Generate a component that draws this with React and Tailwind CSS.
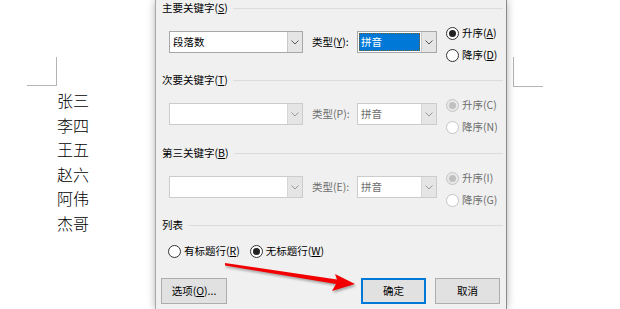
import React from "react";

const ui = "font-['Microsoft_YaHei_UI','Noto_Sans_CJK_SC',sans-serif] text-[10.5px]";

function Chevron({ disabled }) {
    return (
        <svg width="8" height="5" viewBox="0 0 8 5">
            <path d="M0.5 0.5 L4 4 L7.5 0.5" fill="none" stroke={disabled ? "#9a9a9a" : "#5a5a5a"} strokeWidth="1" />
        </svg>
    );
}

function Combo({ text, width, selected, disabled }) {
    return (
        <div className={`flex h-[22px] border bg-white ${disabled ? "border-[#cccccc]" : "border-[#a8a8a8]"} ${width}`}>
            <div className="flex flex-1 items-center p-[1px]">
                {selected ? (
                    <span className="flex h-full w-full items-center bg-[#0078d7] px-[2px] text-white outline outline-1 outline-dotted outline-[#7a5a2a] -outline-offset-1">{text}</span>
                ) : (
                    <span className={`pl-[2px] ${disabled ? "text-[#6d6d6d]" : "text-black"}`}>{text}</span>
                )}
            </div>
            <div className={`flex w-[15px] items-center justify-center border-l bg-[#e5e5e5] ${disabled ? "border-[#d6d6d6]" : "border-[#c8c8c8]"}`}>
                <Chevron disabled={disabled} />
            </div>
        </div>
    );
}

function Radio({ label, checked, disabled }) {
    return (
        <div className="flex h-4 items-center gap-[3px]">
            <span className={`flex h-[13px] w-[13px] items-center justify-center rounded-full border ${disabled ? (checked ? "border-[#c4c4c4] bg-[#e8e8e8]" : "border-[#c4c4c4] bg-white") : "border-[#333333] bg-white"}`}>
                {checked && <span className={`h-[7px] w-[7px] rounded-full ${disabled ? "bg-[#c0c0c0]" : "bg-[#222222]"}`} />}
            </span>
            <span className={disabled ? "text-[#6d6d6d]" : "text-black"}>{label}</span>
        </div>
    );
}

function Header({ children }) {
    return (
        <div className="flex h-4 items-center pl-[6px] pr-[3px]">
            <span className="text-black">{children}</span>
            <div className="ml-[5px] h-px flex-1 bg-[#dcdcdc]" />
        </div>
    );
}

function KeySection({ title, typeLabel, value, typeValue, asc, desc, disabled, selected, className }) {
    return (
        <div className={className}>
            <Header>{title}</Header>
            <div className="mt-[9px] flex items-start pl-[13px]">
                <div className="mt-[6px] flex items-center">
                    <Combo text={value} width="w-[134px]" disabled={disabled} />
                    <span className={`ml-[9px] w-[45px] ${disabled ? "text-[#6d6d6d]" : "text-black"}`}>{typeLabel}</span>
                    <Combo text={typeValue} width="w-[80px]" disabled={disabled} selected={selected} />
                </div>
                <div className="ml-[9px] flex flex-col gap-[6px]">
                    <Radio label={asc} checked disabled={disabled} />
                    <Radio label={desc} disabled={disabled} />
                </div>
            </div>
        </div>
    );
}

function Btn({ children, primary }) {
    return (
        <div className={`flex h-[26px] items-center justify-center bg-[#e1e1e1] text-black ${primary ? "w-[65px] border-2 border-[#0078d7]" : "border border-[#adadad]"}`}>
            {children}
        </div>
    );
}

export default function App() {
    const names = ["张三", "李四", "王五", "赵六", "阿伟", "杰哥"];

    return (
        <div className="relative flex h-[309px] w-[620px] overflow-hidden bg-white">
            <div className="w-[155px] shrink-0">
                <div className="ml-[27px] mt-[57px] h-[29px] w-[30px] border-b border-r border-[#b4b4b4]" />
                <div className="mt-[2px] pl-[57px] font-['Noto_Sans_CJK_SC',sans-serif] text-[16px] font-light leading-[24.5px] text-black">
                    {names.map((n) => (
                        <div key={n}>{n}</div>
                    ))}
                </div>
            </div>

            <div className={`relative z-10 h-full w-[352px] shrink-0 border-x border-l-[#a8a8a8] border-r-[#8a8a8a] bg-[#f0f0f0] shadow-[0_0_8px_rgba(0,0,0,0.3)] ${ui}`}>
                <KeySection title={<>主要关键字(<u>S</u>)</>} typeLabel={<>类型(<u>Y</u>):</>} value="段落数" typeValue="拼音" selected asc={<>升序(<u>A</u>)</>} desc={<>降序(<u>D</u>)</>} />
                <KeySection className="mt-[9px]" title={<>次要关键字(<u>T</u>)</>} typeLabel="类型(P):" value="" typeValue="拼音" disabled asc="升序(C)" desc="降序(N)" />
                <KeySection className="mt-[10px]" title={<>第三关键字(<u>B</u>)</>} typeLabel="类型(E):" value="" typeValue="拼音" disabled asc="升序(I)" desc="降序(G)" />

                <div className="mt-[9px]">
                    <Header>列表</Header>
                    <div className="mt-[10px] flex items-center gap-[10px] pl-[12px]">
                        <Radio label={<>有标题行(<u>R</u>)</>} />
                        <Radio label={<>无标题行(<u>W</u>)</>} checked />
                    </div>
                </div>

                <div className="mt-[19px] flex items-center pl-[5px] pr-[6px]">
                    <Btn><span className="w-[64px] text-center">选项(<u>O</u>)...</span></Btn>
                    <div className="flex-1" />
                    <Btn primary>确定</Btn>
                    <div className="ml-[9px] w-[65px]">
                        <Btn>取消</Btn>
                    </div>
                </div>
            </div>

            <div className="flex-1">
                <div className="ml-[6px] mt-[57px] h-[30px] w-[30px] border-b border-l border-[#b4b4b4]" />
            </div>

            <svg className="pointer-events-none absolute left-0 top-0 z-20 drop-shadow-[1px_2px_1px_rgba(0,0,0,0.3)]" width="620" height="309" viewBox="0 0 620 309">
                <polygon points="225,263 337,279.5 335,274 355,284 332,291 336,284 225,265.5" fill="#f20000" />
            </svg>
        </div>
    );
}
